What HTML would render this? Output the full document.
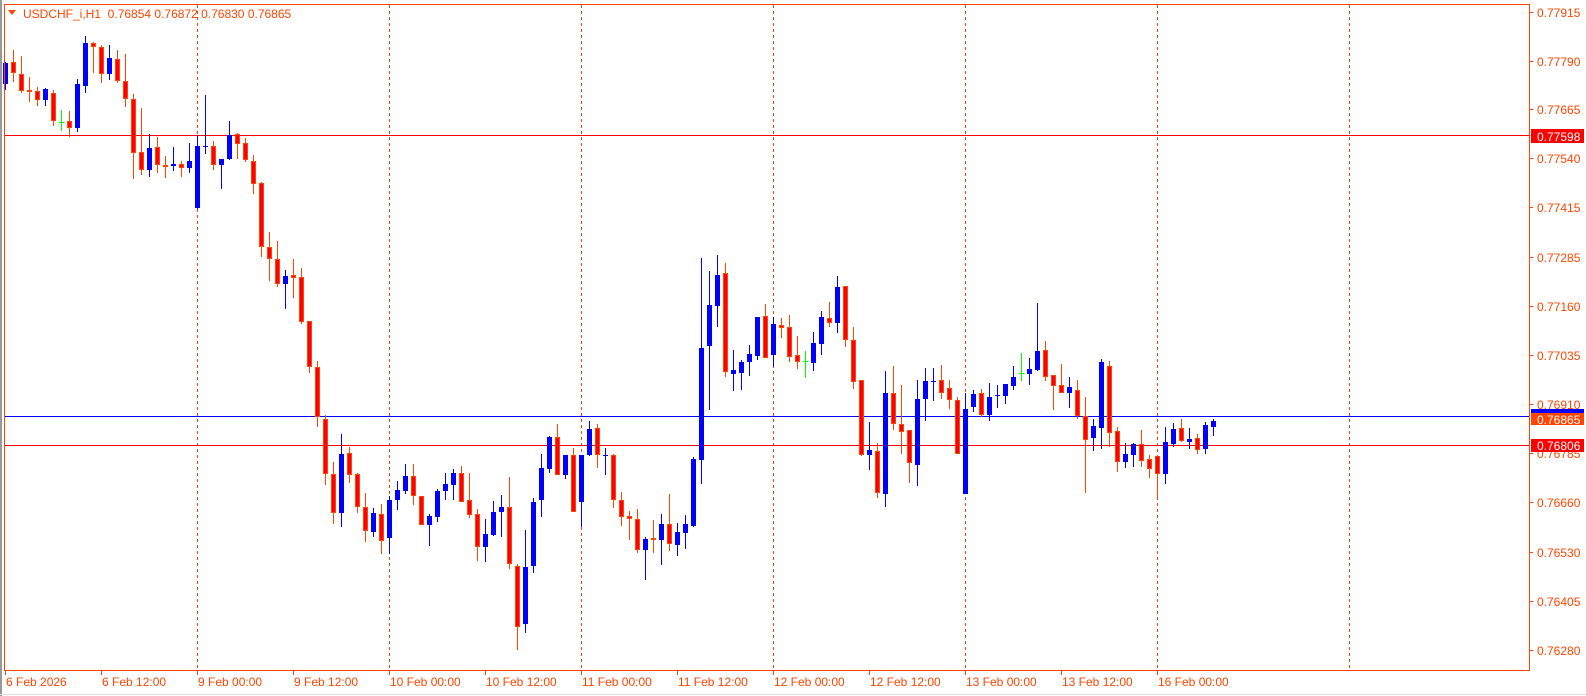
<!DOCTYPE html>
<html><head><meta charset="utf-8"><style>
html,body{margin:0;padding:0;background:#fff;width:1586px;height:696px;overflow:hidden}
svg{display:block}
text{font-family:"Liberation Sans",sans-serif;font-size:12px;white-space:pre}
</style></head><body>
<svg id="s" width="1586" height="696" xmlns="http://www.w3.org/2000/svg">
<rect x="0" y="0" width="1586" height="696" fill="#fff"/>
<line x1="1" y1="0" x2="1" y2="696" stroke="#999" stroke-width="2"/>
<line x1="0" y1="694.5" x2="1586" y2="694.5" stroke="#ddd"/>
<g id="grid" stroke="#FF4500" stroke-width="1" stroke-dasharray="3,3"></g>
<line x1="4" y1="135.5" x2="1529" y2="135.5" stroke="#FF0000"/>
<line x1="4" y1="416.5" x2="1529" y2="416.5" stroke="#0000FF"/>
<line x1="4" y1="445.5" x2="1529" y2="445.5" stroke="#FF0000"/>
<g id="c"></g>
<rect x="4.5" y="4.5" width="1525" height="666" fill="none" stroke="#FF4500"/>
<g id="ax" fill="#FF4500"></g>
<polygon points="8,10 16,10 12,15" fill="#FF4500"/>
<text x="23" y="18" fill="#FF4500" xml:space="preserve">USDCHF_i,H1  0.76854 0.76872 0.76830 0.76865</text>
</svg>
<script>
var d=[[63,84,62,90,'b'],[62,73,50,82,'r'],[74,91,56,93,'r'],[90,92,77,102,'r'],[91,100,87,106,'r'],[89,100,88,106,'b'],[93,121,90,126,'r'],[122,122,110,131,'d'],[121,128,111,137,'r'],[84,128,79,132,'b'],
[43,86,36,93,'b'],[43,47,42,73,'r'],[47,74,45,83,'r'],[58,74,45,80,'b'],[59,81,50,83,'r'],[81,99,54,107,'r'],[99,153,94,179,'r'],[152,170,108,175,'r'],[148,170,134,177,'b'],[147,165,137,173,'r'],
[165,166,156,178,'r'],[164,166,147,171,'b'],[164,168,161,177,'r'],[161,168,143,173,'b'],[146,208,135,209,'b'],[146,147,95,154,'b'],[146,165,141,170,'r'],[159,165,159,189,'b'],[135,159,121,160,'b'],[134,144,133,159,'r'],
[143,160,138,162,'r'],[161,184,155,194,'r'],[183,247,182,257,'r'],[247,259,232,281,'r'],[259,284,241,287,'r'],[276,284,270,309,'b'],[275,278,259,298,'r'],[277,322,268,324,'r'],[321,367,321,373,'r'],[367,417,361,427,'r'],
[419,474,415,485,'r'],[474,513,462,524,'r'],[454,513,434,527,'b'],[453,475,447,483,'r'],[474,507,473,513,'r'],[507,531,493,542,'r'],[513,532,508,537,'b'],[514,541,504,554,'r'],[500,538,496,554,'b'],[490,500,481,510,'b'],
[476,491,464,494,'b'],[476,496,464,505,'r'],[496,525,496,525,'r'],[516,525,514,546,'b'],[491,517,489,522,'b'],[484,491,473,500,'b'],[473,485,469,500,'b'],[473,502,466,502,'r'],[500,515,473,518,'r'],[514,547,509,561,'r'],
[534,547,519,562,'b'],[512,535,501,536,'b'],[507,512,495,537,'b'],[507,564,477,569,'r'],[566,627,564,650,'r'],[567,624,530,633,'b'],[502,566,498,573,'b'],[468,500,454,517,'b'],[437,469,436,473,'b'],[437,475,424,475,'r'],
[455,475,455,479,'b'],[455,512,448,512,'r'],[455,502,455,527,'b'],[429,455,421,456,'b'],[428,455,424,468,'r'],[455,456,448,475,'b'],[455,500,454,508,'r'],[500,517,492,526,'r'],[516,519,511,540,'r'],[519,550,509,553,'r'],
[539,550,537,580,'b'],[538,539,520,553,'r'],[524,540,514,565,'b'],[524,544,494,551,'r'],[532,545,523,556,'b'],[524,533,515,549,'b'],[459,526,457,527,'b'],[348,460,258,484,'b'],[305,346,271,410,'b'],[275,306,255,327,'b'],
[273,372,263,377,'r'],[370,374,350,391,'b'],[362,373,360,390,'b'],[354,362,345,376,'b'],[317,356,317,360,'b'],[316,358,304,358,'r'],[324,355,317,367,'b'],[325,328,318,338,'r'],[327,357,315,362,'r'],[355,362,336,369,'r'],
[361,361,351,378,'d'],[343,363,332,371,'b'],[317,344,311,355,'b'],[318,323,302,327,'r'],[287,323,276,333,'b'],[286,340,286,347,'r'],[340,382,327,389,'r'],[380,455,380,456,'r'],[450,455,422,470,'b'],[451,493,443,498,'r'],
[393,494,371,507,'b'],[393,424,366,430,'r'],[424,432,385,454,'r'],[430,463,430,483,'r'],[399,465,380,486,'b'],[381,399,368,421,'b'],[381,382,368,401,'b'],[380,393,365,399,'r'],[388,400,380,409,'r'],[400,454,397,454,'r'],
[409,494,393,494,'b'],[394,407,390,412,'b'],[393,415,389,417,'r'],[397,415,383,421,'b'],[395,396,385,408,'b'],[384,396,384,404,'b'],[377,386,366,390,'b'],[373,373,353,381,'d'],[369,374,358,385,'b'],[351,370,303,371,'b'],
[350,377,341,381,'r'],[375,386,375,410,'r'],[385,393,364,393,'r'],[387,393,377,408,'b'],[390,416,380,419,'r'],[416,440,397,493,'r'],[426,438,419,451,'b'],[362,428,359,449,'b'],[366,433,361,447,'r'],[431,462,427,472,'r'],
[454,462,443,468,'b'],[444,455,443,467,'b'],[444,461,430,467,'r'],[459,469,455,478,'r'],[456,474,456,499,'r'],[442,474,427,484,'b'],[429,444,423,447,'b'],[428,441,419,442,'r'],[439,442,428,449,'b'],[438,450,434,454,'r'],
[425,449,422,454,'b'],[421,427,419,436,'b']];
var g=document.getElementById('c'),h='';
d.forEach(function(c,i){var x=5.5+8*i,t=c[4];
 var col=t=='b'?'#0000FF':t=='d'?'#00FF00':'#FF4500';
 h+='<line x1="'+x+'" x2="'+x+'" y1="'+c[2]+'" y2="'+c[3]+'" stroke="'+col+'"/>';
 if(t=='d'){h+='<line x1="'+(x-3)+'" x2="'+(x+3)+'" y1="'+(c[0]+.5)+'" y2="'+(c[0]+.5)+'" stroke="#00FF00"/>';}
 else if(t=='b'){h+='<rect x="'+(x-2.5)+'" y="'+c[0]+'" width="5" height="'+Math.max(1,c[1]-c[0])+'" fill="#0000FF"/>';}
 else{h+='<rect x="'+(x-2)+'" y="'+(c[0]+.5)+'" width="4" height="'+Math.max(1,c[1]-c[0]-1)+'" fill="#FF0000" stroke="#FF4500"/>';}
});
g.innerHTML=h;
var gr='';[197.5,389.5,581.5,773.5,965.5,1157.5,1349.5].forEach(function(x){gr+='<line x1="'+x+'" x2="'+x+'" y1="5" y2="670"/>';});
document.getElementById('grid').innerHTML=gr;
var a='',p=[['0.77915',12],['0.77790',61],['0.77665',109],['0.77540',158],['0.77415',207],['0.77285',257],['0.77160',306],['0.77035',355],['0.76910',404],['0.76785',453],['0.76660',502],['0.76530',552],['0.76405',601],['0.76280',650]];
p.forEach(function(q){a+='<rect x="1530" y="'+q[1]+'" width="3" height="1"/><text x="1537" y="'+(q[1]+5)+'">'+q[0]+'</text>';});
var tl=[['6 Feb 2026',5],['6 Feb 12:00',101],['9 Feb 00:00',197],['9 Feb 12:00',293],['10 Feb 00:00',389],['10 Feb 12:00',485],['11 Feb 00:00',581],['11 Feb 12:00',677],['12 Feb 00:00',773],['12 Feb 12:00',869],['13 Feb 00:00',965],['13 Feb 12:00',1061],['16 Feb 00:00',1157]];
tl.forEach(function(q){a+='<rect x="'+q[1]+'" y="671" width="1" height="4"/><text x="'+(q[1]+1)+'" y="686">'+q[0]+'</text>';});
a+='<rect x="1531" y="129" width="53" height="14" fill="#FF0000"/><text x="1537" y="141" fill="#fff">0.77598</text>';
a+='<rect x="1531" y="409" width="53" height="5" fill="#0000FF"/>';
a+='<rect x="1531" y="413" width="53" height="12" fill="#FF4500"/><text x="1537" y="424" fill="#fff">0.76865</text>';
a+='<rect x="1531" y="439" width="53" height="13" fill="#FF0000"/><text x="1537" y="450" fill="#fff">0.76806</text>';
document.getElementById('ax').innerHTML=a;
</script>
</body></html>
